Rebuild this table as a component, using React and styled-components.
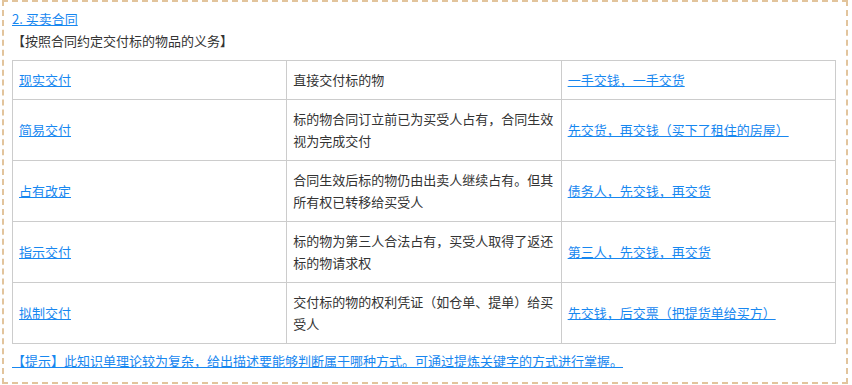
import React from "react";
import styled, { createGlobalStyle } from "styled-components";

const Global = createGlobalStyle`
  html, body { margin: 0; padding: 0; background: #fff; }
  body { font-family: "Noto Sans CJK SC", "Noto Sans", sans-serif; }
`;

const Box = styled.div`
  box-sizing: border-box;
  width: 846px;
  height: 384px;
  margin-left: 2px;
  border: 2px dashed #e2c49c;
  padding: 6px 10px 0 8px;
  font-size: 13px;
  line-height: 22px;
  color: #333;
`;

const Link = styled.a`
  color: #1787f0;
  text-decoration: underline;
  cursor: pointer;
`;

const Line = styled.div`
  height: 22px;
  white-space: nowrap;
`;

const Table = styled.table`
  width: 824px;
  margin: 8px 0 6px;
  border-collapse: collapse;
  table-layout: fixed;
`;

const Row = styled.tr`
  height: ${(p) => p.$h}px;
`;

const Cell = styled.td`
  border: 1px solid #cccccc;
  padding: 8px 7px 8px 6px;
  vertical-align: middle;
  word-break: break-all;
  color: #333;
`;

const rows = [
  ["现实交付", "直接交付标的物", "一手交钱，一手交货", 38],
  ["简易交付", "标的物合同订立前已为买受人占有，合同生效视为完成交付", "先交货，再交钱（买下了租住的房屋）", 61],
  ["占有改定", "合同生效后标的物仍由出卖人继续占有。但其所有权已转移给买受人", "债务人，先交钱，再交货", 61],
  ["指示交付", "标的物为第三人合法占有，买受人取得了返还标的物请求权", "第三人，先交钱，再交货", 61],
  ["拟制交付", "交付标的物的权利凭证（如仓单、提单）给买受人", "先交钱，后交票（把提货单给买方）", 61],
];

export default function App() {
  return (
    <>
      <Global />
      <Box>
        <Line>
          <Link>2. 买卖合同</Link>
        </Line>
        <Line>【按照合同约定交付标的物品的义务】</Line>
        <Table>
          <tbody>
            {rows.map(([a, b, c, h]) => (
              <Row key={a} $h={h}>
                <Cell>
                  <Link>{a}</Link>
                </Cell>
                <Cell>{b}</Cell>
                <Cell>
                  <Link>{c}</Link>
                </Cell>
              </Row>
            ))}
          </tbody>
        </Table>
        <Line>
          <Link>【提示】此知识单理论较为复杂，给出描述要能够判断属于哪种方式。可通过提炼关键字的方式进行掌握。</Link>
        </Line>
      </Box>
    </>
  );
}
